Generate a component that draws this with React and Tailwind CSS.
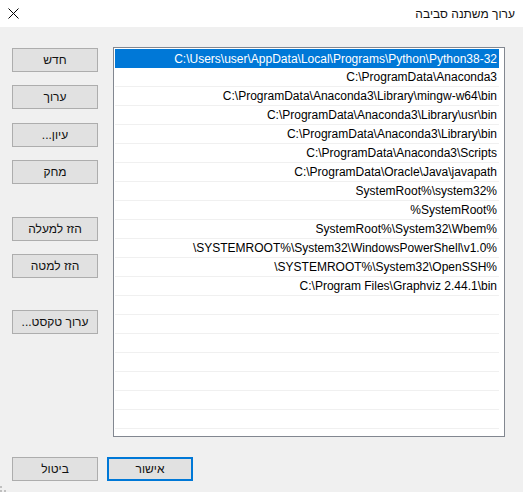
import React from "react";

const rows = [
  "C:\\Users\\user\\AppData\\Local\\Programs\\Python\\Python38-32",
  "C:\\ProgramData\\Anaconda3",
  "C:\\ProgramData\\Anaconda3\\Library\\mingw-w64\\bin",
  "C:\\ProgramData\\Anaconda3\\Library\\usr\\bin",
  "C:\\ProgramData\\Anaconda3\\Library\\bin",
  "C:\\ProgramData\\Anaconda3\\Scripts",
  "C:\\ProgramData\\Oracle\\Java\\javapath",
  "SystemRoot%\\system32%",
  "%SystemRoot%",
  "SystemRoot%\\System32\\Wbem%",
  "\\SYSTEMROOT%\\System32\\WindowsPowerShell\\v1.0%",
  "\\SYSTEMROOT%\\System32\\OpenSSH%",
  "C:\\Program Files\\Graphviz 2.44.1\\bin",
  "", "", "", "", "", "", "",
];

function Btn({ children, className = "" }) {
  return (
    <div
      dir="rtl"
      className={
        "w-[86px] h-[24px] flex items-center justify-center bg-[#e1e1e1] border border-[#adadad] text-[12px] text-[#111]" +
        " " +
        className
      }
    >
      {children}
    </div>
  );
}

export default function App() {
  return (
    <div
      className="relative w-[523px] h-[492px] bg-[#f0f0f0] flex flex-col overflow-hidden"
      style={{ fontFamily: '"Liberation Sans", "DejaVu Sans", sans-serif' }}
    >
      <div className="h-[27px] bg-white flex items-center justify-between pl-[8px] pr-[8px]">
        <svg width="11" height="11" viewBox="0 0 11 11" className="mb-[1px]">
          <path d="M0.5 0.5 L10.5 10.5 M10.5 0.5 L0.5 10.5" stroke="#000" strokeWidth="1" fill="none" />
        </svg>
        <span dir="rtl" className="text-[12px] text-[#111]">ערוך משתנה סביבה</span>
      </div>

      <div className="flex flex-row pt-[20px] pl-[12px]">
        <div className="flex flex-col w-[86px] pt-[1px]">
          <Btn>חדש</Btn>
          <Btn className="mt-[13px]">ערוך</Btn>
          <Btn className="mt-[14px]">עיון...</Btn>
          <Btn className="mt-[13px]">מחק</Btn>
          <Btn className="mt-[33px]">הזז למעלה</Btn>
          <Btn className="mt-[13px]">הזז למטה</Btn>
          <Btn className="mt-[32px]">ערוך טקסט...</Btn>
        </div>
        <div className="ml-[15px] w-[392px] h-[390px] border border-[#828790] bg-white pt-[1px] pl-[1px] pr-[5px]">
          {rows.map((r, i) => (
            <div
              key={i}
              dir="ltr"
              className={
                "h-[19px] flex items-center justify-end pr-[2px] text-[12px] whitespace-nowrap " +
                (i === 0
                  ? "bg-[#0078d7] text-white"
                  : "border-b border-[#f0f0f0] text-black")
              }
            >
              {r}
            </div>
          ))}
        </div>
      </div>

      <div className="flex flex-row pl-[12px] mt-[20px] gap-[9px]">
        <Btn>ביטול</Btn>
        <div
          dir="rtl"
          className="w-[86px] h-[24px] flex items-center justify-center bg-[#e1e1e1] border-2 border-[#0078d7] text-[12px] text-[#111]"
        >
          אישור
        </div>
      </div>

      <svg width="6" height="6" viewBox="0 0 6 6" className="absolute left-0 bottom-0">
        <rect x="0" y="0" width="2" height="2" fill="#c0c0c0" />
        <rect x="0" y="4" width="2" height="2" fill="#c0c0c0" />
        <rect x="4" y="4" width="2" height="2" fill="#c0c0c0" />
      </svg>
    </div>
  );
}
